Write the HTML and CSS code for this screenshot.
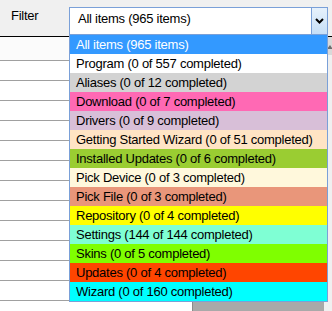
FILE: index.html
```html
<!DOCTYPE html>
<html lang="en">
<head>
  <meta charset="UTF-8" />
  <title>Filter</title>
  <link rel="stylesheet" href="styles.css">
</head>
<body>

  <div class="window">
    <!-- Toolbar -->
    <div class="toolbar">
      <span class="filter-label">Filter</span>
      <div class="combo">
        <span class="combo-value">All items (965 items)</span>
        <span class="combo-btn">
          <svg width="9" height="6" viewBox="0 0 9 6"><polyline points="1,1 4.5,4.5 8,1" fill="none" stroke="#000" stroke-width="2"/></svg>
        </span>
      </div>
    </div>

    <!-- Grid behind the list -->
    <div class="content">
      <div class="grid">
        <div class="grid-row grid-head"></div>
        <div class="grid-row"></div>
        <div class="grid-row"></div>
        <div class="grid-row"></div>
        <div class="grid-row"></div>
        <div class="grid-row"></div>
        <div class="grid-row"></div>
        <div class="grid-row"></div>
        <div class="grid-row"></div>
        <div class="grid-row"></div>
        <div class="grid-row"></div>
        <div class="grid-row"></div>
        <div class="grid-row"></div>
        <div class="grid-foot">
          <div class="grid-blank"></div>
          <div class="grid-dark"></div>
        </div>
      </div>
      <div class="side">
        <div class="side-head">
          <svg width="5" height="4" viewBox="0 0 5 4"><polygon points="0,4 3,0 5,3 5,4" fill="#6d6d6d"/></svg>
        </div>
      </div>
    </div>

    <!-- Open dropdown -->
    <ul class="dropdown">
      <li class="selected">All items (965 items)</li>
      <li>Program (0 of 557 completed)</li>
      <li class="c-aliases">Aliases (0 of 12 completed)</li>
      <li class="c-download">Download (0 of 7 completed)</li>
      <li class="c-drivers">Drivers (0 of 9 completed)</li>
      <li class="c-getting">Getting Started Wizard (0 of 51 completed)</li>
      <li class="c-installed">Installed Updates (0 of 6 completed)</li>
      <li class="c-device">Pick Device (0 of 3 completed)</li>
      <li class="c-file">Pick File (0 of 3 completed)</li>
      <li class="c-repo">Repository (0 of 4 completed)</li>
      <li class="c-settings">Settings (144 of 144 completed)</li>
      <li class="c-skins">Skins (0 of 5 completed)</li>
      <li class="c-updates">Updates (0 of 4 completed)</li>
      <li class="c-wizard">Wizard (0 of 160 completed)</li>
    </ul>
  </div>

</body>
</html>
```

FILE: styles.css
```css
:root {
  --edge: #7aa0d8;
  --line: #a0a0a0;
  --face: #f0f0f0;
}

* {
  margin: 0;
  padding: 0;
  box-sizing: border-box;
}

html,
body {
  width: 100%;
  height: 100%;
  overflow: hidden;
  background: var(--face);
  font-family: 'Liberation Sans', Arial, sans-serif;
  font-size: 13px;
  letter-spacing: -0.25px;
  color: #000;
}

.window {
  position: relative;
  width: 332px;
  height: 311px;
  display: flex;
  flex-direction: column;
}

/* Toolbar */
.toolbar {
  height: 36px;
  display: flex;
  align-items: flex-start;
  background: var(--face);
}

.filter-label {
  width: 69px;
  padding: 8px 0 0 11px;
  line-height: 15px;
}

.combo {
  margin-top: 7px;
  width: 259px;
  height: 28px;
  display: flex;
  background: #fff;
  border: 1px solid var(--edge);
}

.combo-value {
  flex: 1;
  padding: 3px 0 0 8px;
  line-height: 15px;
}

.combo-btn {
  width: 16px;
  display: flex;
  justify-content: center;
  align-items: center;
  padding-bottom: 1px;
  border-left: 1px solid var(--edge);
  background: linear-gradient(#e6f1fc, #c6dff7);
}

/* Grid */
.content {
  flex: 1;
  display: flex;
  border-top: 1px solid #000;
}

.grid {
  width: 325px;
  display: flex;
  flex-direction: column;
  background: #fff;
}

.grid-row {
  height: 20px;
  border-bottom: 1px solid var(--line);
}

.grid-head {
  height: 24px;
  background: #fbfbfb;
}

.grid-foot {
  flex: 1;
  display: flex;
  padding-top: 1px;
}

.grid-blank {
  width: 192px;
}

.grid-dark {
  flex: 1;
  background: #a9a9a9;
  border-left: 1px solid #8a8a8a;
}

.side {
  flex: 1;
  background: var(--face);
}

.side-head {
  height: 18px;
  padding: 8px 0 0 3px;
  background: #d9d9d9;
}

.side-head svg {
  display: block;
}

/* Dropdown list */
.dropdown {
  position: absolute;
  top: 35px;
  left: 69px;
  width: 259px;
  list-style: none;
  background: #fff;
  border: 1px solid var(--edge);
  border-top: 0;
}

.dropdown li {
  height: 19px;
  line-height: 19px;
  padding-left: 6px;
  white-space: nowrap;
}

.dropdown li.selected {
  background: #3399ff;
  color: #fff;
}

.c-aliases { background: #d3d3d3; }
.c-download { background: #ff69b4; }
.c-drivers { background: #d8bfd8; }
.c-getting { background: #ffe4c4; }
.c-installed { background: #9acd32; }
.c-device { background: #fff8dc; }
.c-file { background: #e9967a; }
.c-repo { background: #ffff00; }
.c-settings { background: #7fffd4; }
.c-skins { background: #7fff00; }
.c-updates { background: #ff4500; }
.c-wizard { background: #00ffff; }
```
